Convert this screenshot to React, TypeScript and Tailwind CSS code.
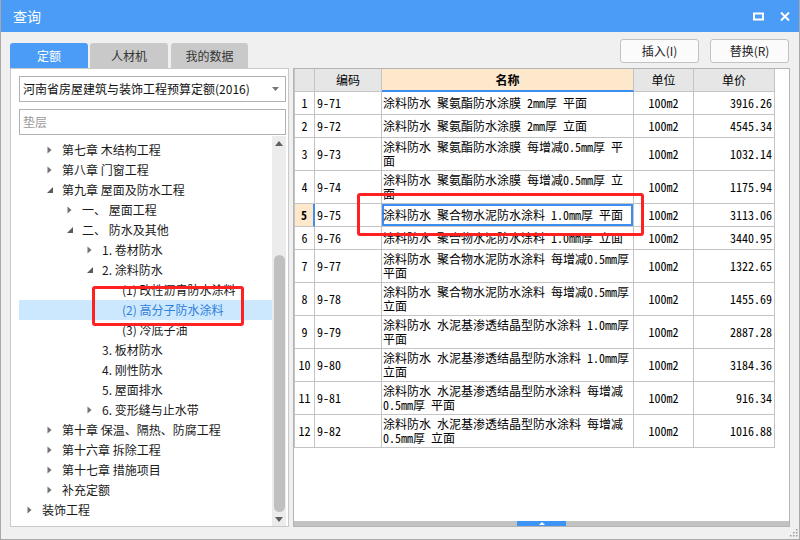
import React from 'react';

// Types for the quota lookup dialog
interface QuotaRow {
  no: number;
  code: string;
  name: string[];
  unit: string;
  price: string;
}

interface TreeNode {
  level: number;
  label: string;
  state: 'collapsed' | 'expanded' | 'leaf';
  selected?: boolean;
}

const quotaRows: QuotaRow[] = [
  { no: 1, code: '9-71', name: ['涂料防水 聚氨酯防水涂膜 2mm厚 平面'], unit: '100m2', price: '3916.26' },
  { no: 2, code: '9-72', name: ['涂料防水 聚氨酯防水涂膜 2mm厚 立面'], unit: '100m2', price: '4545.34' },
  { no: 3, code: '9-73', name: ['涂料防水 聚氨酯防水涂膜 每增减0.5mm厚 平', '面'], unit: '100m2', price: '1032.14' },
  { no: 4, code: '9-74', name: ['涂料防水 聚氨酯防水涂膜 每增减0.5mm厚 立', '面'], unit: '100m2', price: '1175.94' },
  { no: 5, code: '9-75', name: ['涂料防水 聚合物水泥防水涂料 1.0mm厚 平面'], unit: '100m2', price: '3113.06' },
  { no: 6, code: '9-76', name: ['涂料防水 聚合物水泥防水涂料 1.0mm厚 立面'], unit: '100m2', price: '3440.95' },
  { no: 7, code: '9-77', name: ['涂料防水 聚合物水泥防水涂料 每增减0.5mm厚', '平面'], unit: '100m2', price: '1322.65' },
  { no: 8, code: '9-78', name: ['涂料防水 聚合物水泥防水涂料 每增减0.5mm厚', '立面'], unit: '100m2', price: '1455.69' },
  { no: 9, code: '9-79', name: ['涂料防水 水泥基渗透结晶型防水涂料 1.0mm厚', '平面'], unit: '100m2', price: '2887.28' },
  { no: 10, code: '9-80', name: ['涂料防水 水泥基渗透结晶型防水涂料 1.0mm厚', '立面'], unit: '100m2', price: '3184.36' },
  { no: 11, code: '9-81', name: ['涂料防水 水泥基渗透结晶型防水涂料 每增减', '0.5mm厚 平面'], unit: '100m2', price: '916.34' },
  { no: 12, code: '9-82', name: ['涂料防水 水泥基渗透结晶型防水涂料 每增减', '0.5mm厚 立面'], unit: '100m2', price: '1016.88' },
];

const treeNodes: TreeNode[] = [
  { level: 1, label: '第七章 木结构工程', state: 'collapsed' },
  { level: 1, label: '第八章 门窗工程', state: 'collapsed' },
  { level: 1, label: '第九章 屋面及防水工程', state: 'expanded' },
  { level: 2, label: '一、 屋面工程', state: 'collapsed' },
  { level: 2, label: '二、 防水及其他', state: 'expanded' },
  { level: 3, label: '1. 卷材防水', state: 'collapsed' },
  { level: 3, label: '2. 涂料防水', state: 'expanded' },
  { level: 4, label: '(1) 改性沥青防水涂料', state: 'leaf' },
  { level: 4, label: '(2) 高分子防水涂料', state: 'leaf', selected: true },
  { level: 4, label: '(3) 冷底子油', state: 'leaf' },
  { level: 3, label: '3. 板材防水', state: 'leaf' },
  { level: 3, label: '4. 刚性防水', state: 'leaf' },
  { level: 3, label: '5. 屋面排水', state: 'leaf' },
  { level: 3, label: '6. 变形缝与止水带', state: 'collapsed' },
  { level: 1, label: '第十章 保温、隔热、防腐工程', state: 'collapsed' },
  { level: 1, label: '第十六章 拆除工程', state: 'collapsed' },
  { level: 1, label: '第十七章 措施项目', state: 'collapsed' },
  { level: 1, label: '补充定额', state: 'collapsed' },
  { level: 0, label: '装饰工程', state: 'collapsed' },
];

const uiFont = "font-['Noto_Sans_CJK_SC','Noto_Sans',sans-serif]";
const gridFont = "font-['Noto_Sans_Mono_CJK_SC','Liberation_Mono','Noto_Sans_CJK_SC',monospace]";

function TreeArrow({ state }: { state: TreeNode['state'] }) {
  if (state === 'collapsed') {
    return (
      <svg width="5" height="8" viewBox="0 0 5 8">
        <path d="M0.5 0.5 L4.5 4 L0.5 7.5 Z" fill="#707070" />
      </svg>
    );
  }
  if (state === 'expanded') {
    return (
      <svg width="6" height="6" viewBox="0 0 6 6">
        <path d="M6 0 L6 6 L0 6 Z" fill="#5a5a5a" />
      </svg>
    );
  }
  return null;
}

const indent: Record<number, string> = {
  0: 'pl-[4px]',
  1: 'pl-[24px]',
  2: 'pl-[44px]',
  3: 'pl-[64px]',
  4: 'pl-[84px]',
};

function QuotaTree() {
  return (
    <div className="flex-1 pt-[4px]">
      {treeNodes.map((node, i) => (
        <div
          key={i}
          className={`flex h-[20px] items-center ${indent[node.level]} ${
            node.selected ? 'bg-[#cce8ff] text-[#2f7fd9]' : 'text-[#1a1a1a]'
          }`}
        >
          <div className="flex w-[19px] items-center pl-[4px]">
            <TreeArrow state={node.state} />
          </div>
          <span className="whitespace-pre text-[12px] leading-none">{node.label}</span>
        </div>
      ))}
    </div>
  );
}

function TreeScrollbar() {
  return (
    <div className="flex w-[14px] flex-col bg-[#ececec]">
      <div className="flex h-[14px] items-center justify-center">
        <svg width="8" height="5" viewBox="0 0 8 5">
          <path d="M0 5 L4 0 L8 5 Z" fill="#5f5f5f" />
        </svg>
      </div>
      <div className="h-[105px]" />
      <div className="ml-[2px] mr-[1px] h-[257px] rounded-full bg-[#c0c0c0]" />
      <div className="flex flex-1 items-center justify-center">
        <svg width="8" height="5" viewBox="0 0 8 5">
          <path d="M0 0 L8 0 L4 5 Z" fill="#5f5f5f" />
        </svg>
      </div>
    </div>
  );
}

function QuotaGrid() {
  const cell = 'border-r border-b border-[#c4c4c4]';
  return (
    <div className={`w-[480px] border-l border-[#c4c4c4] text-[12px] text-black ${gridFont}`}>
      {/* Header */}
      <div className="grid h-[23px] grid-cols-[20px_67px_252px_60px_81px]">
        <div className={`${cell} bg-[#e6e6e6]`} />
        <div className={`${cell} ${uiFont} flex items-center justify-center bg-[#e6e6e6]`}>编码</div>
        <div className={`border-r border-b-2 border-r-[#c4c4c4] border-b-[#3d8ef2] ${uiFont} flex items-center justify-center bg-[#fde8cb] font-bold`}>
          名称
        </div>
        <div className={`${cell} ${uiFont} flex items-center justify-center bg-[#e6e6e6]`}>单位</div>
        <div className={`${cell} ${uiFont} flex items-center justify-center bg-[#e6e6e6]`}>单价</div>
      </div>

      {/* Body */}
      {quotaRows.map((row) => {
        const current = row.no === 5;
        return (
          <div
            key={row.no}
            className={`grid grid-cols-[20px_67px_252px_60px_81px] ${row.name.length > 1 ? 'h-[33px]' : 'h-[23px]'}`}
          >
            <div
              className={`flex items-center justify-center border-b border-[#c4c4c4] ${
                current ? 'border-r-2 border-r-[#3d8ef2] bg-[#fde8cb] font-bold' : 'border-r'
              }`}
            >
              {row.no}
            </div>
            <div className={`${cell} flex items-center pl-[2px]`}>{row.code}</div>
            <div
              className={`${cell} flex flex-col justify-center pl-[1px] leading-[14px] ${
                current ? 'shadow-[inset_0_0_0_2px_#3d8ef2]' : ''
              }`}
            >
              {row.name.map((line, i) => (
                <span key={i} className="whitespace-pre">
                  {line}
                </span>
              ))}
            </div>
            <div className={`${cell} flex items-center justify-center`}>{row.unit}</div>
            <div className={`${cell} flex items-center justify-end pr-[2px]`}>{row.price}</div>
          </div>
        );
      })}
    </div>
  );
}

export default function App() {
  return (
    <div className={`relative flex h-[540px] w-[800px] flex-col overflow-hidden border-x border-b border-[#a9a9a9] bg-[#f0f0f0] ${uiFont}`}>
      {/* Title bar */}
      <header className="flex h-[32px] shrink-0 items-center justify-between bg-[#4a9cf6] pl-[12px] pr-[9px]">
        <span className="text-[14px] text-white">查询</span>
        <div className="flex items-center gap-[16px]">
          <svg width="11" height="9" viewBox="0 0 11 9">
            <rect x="1" y="1.5" width="9" height="6" fill="none" stroke="white" strokeWidth="2" />
          </svg>
          <svg width="10" height="9" viewBox="0 0 10 9">
            <path d="M1 0.5 L9 8.5 M9 0.5 L1 8.5" stroke="white" strokeWidth="2" />
          </svg>
        </div>
      </header>

      <div className="flex flex-1 flex-col px-[9px]">
        {/* Tabs and actions */}
        <div className="flex h-[36px] shrink-0 justify-between">
          <div className="mt-[11px] flex gap-[2px] text-[12px]">
            <div className="flex h-[25px] w-[78px] items-center justify-center rounded-t-[3px] bg-[#4a9cf6] text-white">定额</div>
            <div className="flex h-[25px] w-[78px] items-center justify-center rounded-t-[3px] bg-[#c9c9c9] text-[#333]">人材机</div>
            <div className="ml-[1px] flex h-[25px] w-[77px] items-center justify-center rounded-t-[3px] bg-[#c9c9c9] text-[#333]">我的数据</div>
          </div>
          <div className="mt-[7px] mr-[1px] flex gap-[11px] text-[12px] text-[#222]">
            <button className="h-[24px] w-[79px] rounded-[3px] border border-[#c2c2c2] bg-[#fbfbfb]">插入(I)</button>
            <button className="h-[24px] w-[79px] rounded-[3px] border border-[#c2c2c2] bg-[#fbfbfb]">替换(R)</button>
          </div>
        </div>

        {/* Main panels */}
        <div className="flex h-[459px] gap-[4px]">
          {/* Left: quota library tree */}
          <div className="flex w-[279px] flex-col border border-[#c9c9c9] bg-white pl-[8px] pr-[2px] pt-[7px]">
            <div className="flex h-[26px] items-center justify-between border border-[#b1b1b1] pl-[3px] pr-[6px] text-[12px] text-[#111]">
              <span>河南省房屋建筑与装饰工程预算定额(2016)</span>
              <svg width="7" height="4" viewBox="0 0 7 4">
                <path d="M0 0 L7 0 L3.5 4 Z" fill="#777" />
              </svg>
            </div>
            <div className="mt-[7px] flex h-[26px] items-center border border-[#b1b1b1] pl-[3px] text-[12px] text-[#9a9a9a]">
              垫层
            </div>
            <div className="mt-[1px] flex min-h-0 flex-1">
              <QuotaTree />
              <TreeScrollbar />
            </div>
          </div>

          {/* Right: quota list */}
          <div className="flex flex-1 flex-col border border-[#b4b4b4] bg-white">
            <div className="flex-1">
              <QuotaGrid />
            </div>
            <div className="flex h-[5px] justify-center bg-[#c2c2c2]">
              <div className="flex w-[49px] items-center justify-center bg-[#3d94f5]">
                <svg width="6" height="3" viewBox="0 0 6 3">
                  <path d="M0 3 L3 0 L6 3 Z" fill="white" />
                </svg>
              </div>
            </div>
          </div>
        </div>
      </div>

      {/* Resize grip */}
      <svg className="absolute bottom-[2px] right-[1px]" width="9" height="9" viewBox="0 0 9 9">
        <rect x="7" y="1" width="1.5" height="1.5" fill="#9a9a9a" />
        <rect x="4" y="4" width="1.5" height="1.5" fill="#9a9a9a" />
        <rect x="7" y="4" width="1.5" height="1.5" fill="#9a9a9a" />
        <rect x="1" y="7" width="1.5" height="1.5" fill="#9a9a9a" />
        <rect x="4" y="7" width="1.5" height="1.5" fill="#9a9a9a" />
        <rect x="7" y="7" width="1.5" height="1.5" fill="#9a9a9a" />
      </svg>

      {/* Red annotation boxes */}
      <div className="pointer-events-none absolute left-[91px] top-[286px] h-[40px] w-[152px] rounded-[3px] border-[3px] border-[#ff2020]" />
      <div className="pointer-events-none absolute left-[356px] top-[193px] h-[43px] w-[287px] rounded-[3px] border-[3px] border-[#ff2020]" />
    </div>
  );
}
